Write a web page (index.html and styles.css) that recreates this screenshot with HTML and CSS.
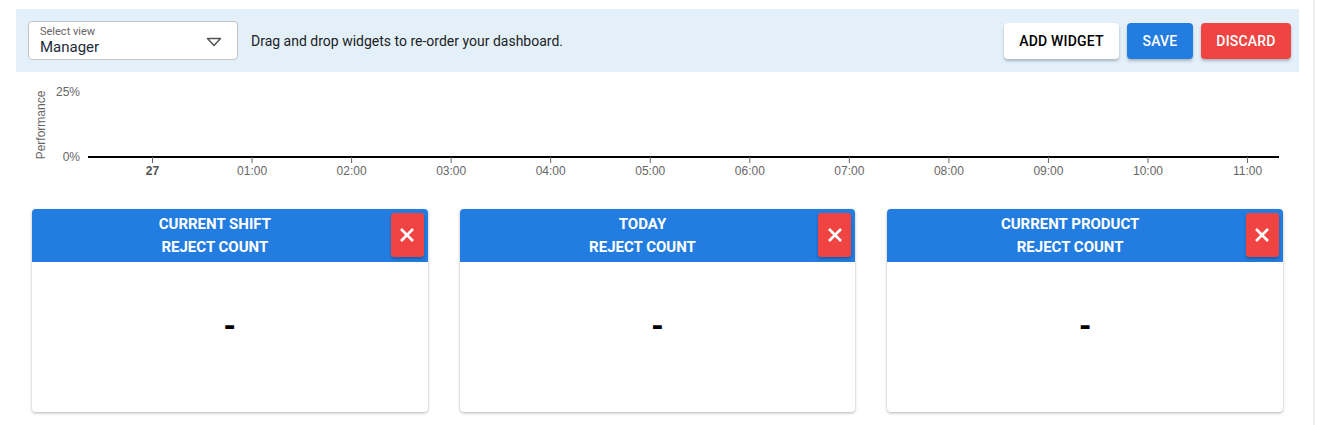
FILE: index.html
```html
<!DOCTYPE html>
<html>

<head>
    <title>Dashboard</title>
    <link rel="stylesheet" href="styles.css">
</head>

<body>
    <div class="page">
        <div class="toolbar">
            <div class="selectView">
                <div class="selectText">
                    <span class="selectLabel">Select view</span>
                    <span class="selectValue">Manager</span>
                </div>
                <svg class="selectArrow" width="16" height="10" viewBox="0 0 16 10">
                    <path d="M1.5 1.5 L14.5 1.5 L8 8.5 Z" fill="none" stroke="#555" stroke-width="1.5" stroke-linejoin="round" />
                </svg>
            </div>
            <span class="hint">Drag and drop widgets to re-order your dashboard.</span>
            <div class="actions">
                <button class="btn btnAdd">Add widget</button>
                <button class="btn btnSave">Save</button>
                <button class="btn btnDiscard">Discard</button>
            </div>
        </div>

        <div class="chart">
            <svg width="1283" height="112" viewBox="0 0 1283 112">
                <text class="axisTitle" transform="translate(29 45) rotate(-90)" text-anchor="middle">Performance</text>
                <text class="axisY" x="64" y="16" text-anchor="end">25%</text>
                <text class="axisY" x="64" y="81" text-anchor="end">0%</text>
                <line x1="72" y1="77" x2="1263" y2="77" stroke="#000" stroke-width="2" />
                <g id="ticks"></g>
            </svg>
        </div>

        <div class="widgets">
            <div class="card">
                <div class="cardHead">
                    <div class="cardTitle">CURRENT SHIFT<br>REJECT COUNT</div>
                    <button class="btnClose">
                        <svg width="16" height="16" viewBox="0 0 16 16">
                            <path d="M2 2 L14 14 M14 2 L2 14" stroke="#fff" stroke-width="2.6" />
                        </svg>
                    </button>
                </div>
                <div class="cardBody">-</div>
            </div>
            <div class="card">
                <div class="cardHead">
                    <div class="cardTitle">TODAY<br>REJECT COUNT</div>
                    <button class="btnClose">
                        <svg width="16" height="16" viewBox="0 0 16 16">
                            <path d="M2 2 L14 14 M14 2 L2 14" stroke="#fff" stroke-width="2.6" />
                        </svg>
                    </button>
                </div>
                <div class="cardBody">-</div>
            </div>
            <div class="card">
                <div class="cardHead">
                    <div class="cardTitle">CURRENT PRODUCT<br>REJECT COUNT</div>
                    <button class="btnClose">
                        <svg width="16" height="16" viewBox="0 0 16 16">
                            <path d="M2 2 L14 14 M14 2 L2 14" stroke="#fff" stroke-width="2.6" />
                        </svg>
                    </button>
                </div>
                <div class="cardBody">-</div>
            </div>
        </div>
    </div>

    <script>
        // eixo X do grafico
        var labels = ['27', '01:00', '02:00', '03:00', '04:00', '05:00', '06:00', '07:00', '08:00', '09:00', '10:00', '11:00'];
        var g = document.getElementById('ticks');
        var ns = 'http://www.w3.org/2000/svg';

        labels.forEach(function (label, index) {
            var x = 136.5 + index * 99.55;

            var tick = document.createElementNS(ns, 'line');
            tick.setAttribute('x1', x);
            tick.setAttribute('x2', x);
            tick.setAttribute('y1', 77);
            tick.setAttribute('y2', 83);
            tick.setAttribute('stroke', '#666');
            g.appendChild(tick);

            var text = document.createElementNS(ns, 'text');
            text.setAttribute('x', x);
            text.setAttribute('y', 95);
            text.setAttribute('text-anchor', 'middle');
            text.setAttribute('class', index === 0 ? 'axisX axisBold' : 'axisX');
            text.textContent = label;
            g.appendChild(text);
        });
    </script>
</body>

</html>
```

FILE: styles.css
```css
body {
    margin: 0;
    font-family: Roboto, Arial, sans-serif;
    background-color: #fff;
}

.page {
    width: 1315px;
    min-height: 425px;
    box-sizing: border-box;
    padding: 9px 14px 0 16px;
    border-right: 2px solid #eeeeee;
}

.toolbar {
    display: flex;
    align-items: center;
    height: 63px;
    padding: 0 8px 0 12px;
    background-color: #e3f0fa;
    box-sizing: border-box;
}

.selectView {
    display: flex;
    align-items: center;
    justify-content: space-between;
    width: 210px;
    height: 39px;
    box-sizing: border-box;
    padding: 0 15px 0 11px;
    background-color: #fff;
    border: 1px solid #c2c2c2;
    border-radius: 4px;
}

.selectText {
    display: flex;
    flex-direction: column;
    margin-top: 1px;
}

.selectLabel {
    font-size: 11px;
    line-height: 12px;
    color: #666;
}

.selectValue {
    font-size: 15px;
    line-height: 18px;
    color: #1b2a3a;
}

.selectArrow {
    margin-top: 2px;
}

.hint {
    margin-left: 13px;
    font-size: 14px;
    color: #222;
}

.actions {
    display: flex;
    gap: 8px;
    margin-left: auto;
}

.btn {
    height: 36px;
    padding: 0;
    border: none;
    border-radius: 4px;
    font-family: Roboto, Arial, sans-serif;
    font-size: 14px;
    font-weight: 500;
    text-transform: uppercase;
    letter-spacing: 0.2px;
    white-space: nowrap;
    cursor: pointer;
    box-shadow: 0 2px 3px rgba(0, 0, 0, 0.25);
}

.btnAdd {
    width: 115px;
    background-color: #fff;
    color: #000;
}

.btnSave {
    width: 66px;
    background-color: #237ce0;
    color: #fff;
}

.btnDiscard {
    width: 90px;
    background-color: #ef4441;
    color: #fff;
}

.chart {
    height: 112px;
    margin-top: 8px;
}

.chart svg {
    display: block;
}

.axisTitle,
.axisY,
.axisX {
    font-family: "Liberation Sans", Arial, sans-serif;
    font-size: 12px;
    fill: #666;
}

.axisBold {
    font-weight: bold;
    fill: #555;
}

.widgets {
    display: grid;
    grid-template-columns: repeat(3, 1fr);
    gap: 32px;
    padding: 17px 16px 0 16px;
}

.card {
    height: 203px;
    background-color: #fff;
    border-radius: 4px;
    overflow: hidden;
    box-shadow: 0 1px 3px rgba(0, 0, 0, 0.3);
    display: flex;
    flex-direction: column;
}

.cardHead {
    position: relative;
    height: 53px;
    padding-right: 30px;
    background-color: #237ce0;
    display: flex;
    align-items: center;
    justify-content: center;
}

.cardTitle {
    color: #fff;
    font-size: 15px;
    font-weight: 700;
    line-height: 23px;
    text-align: center;
}

.btnClose {
    position: absolute;
    top: 4px;
    right: 4px;
    width: 33px;
    height: 44px;
    border: none;
    border-radius: 3px;
    background-color: #ef4441;
    padding: 0;
    display: flex;
    align-items: center;
    justify-content: center;
    box-shadow: 0 2px 3px rgba(0, 0, 0, 0.25);
    cursor: pointer;
}

.cardBody {
    flex: 1;
    display: flex;
    align-items: center;
    justify-content: center;
    padding-bottom: 24px;
    font-size: 30px;
    font-weight: 900;
    color: #000;
}
```
